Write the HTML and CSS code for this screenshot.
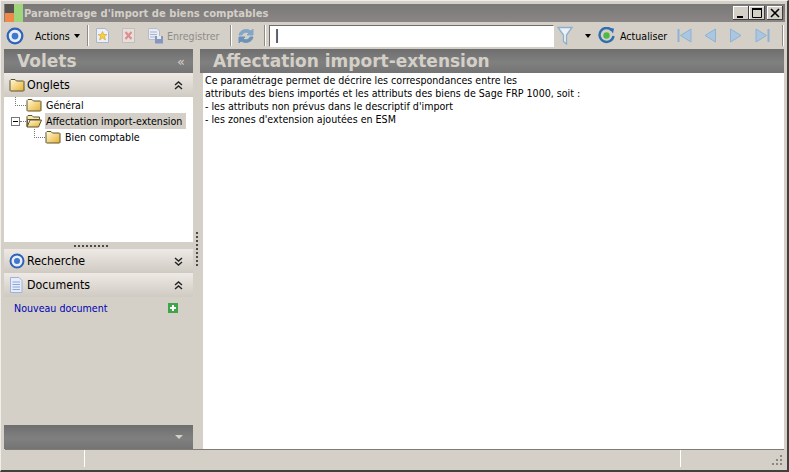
FILE: index.html
```html
<!DOCTYPE html>
<html>
<head>
    <meta charset="UTF-8">
    <title>Paramétrage d'import de biens comptables</title>
    <link rel="stylesheet" href="styles.css">
</head>
<body>
    <svg class="defs" width="0" height="0">
        <defs>
            <linearGradient id="folderFill" x1="0" y1="0" x2="1" y2="1">
                <stop offset="0" stop-color="#fffbe0"/>
                <stop offset="1" stop-color="#e8b02c"/>
            </linearGradient>
            <symbol id="folder" viewBox="0 0 16 14">
                <path d="M1 12.500V2.500L2 1.500H6L7.500 3H14.500L15 3.500V12.500L14.500 13H1.500Z" fill="url(#folderFill)" stroke="#5c5430"/>
            </symbol>
            <symbol id="folder-open" viewBox="0 0 16 14">
                <path d="M1 12.500V2.500L2 1.500H6L7.500 3H13.500V5.500H1.500Z" fill="#f6e6a8" stroke="#5c5430"/>
                <path d="M1 13L4 6H15.500L12.500 13Z" fill="url(#folderFill)" stroke="#5c5430"/>
            </symbol>
            <symbol id="target" viewBox="0 0 16 16">
                <circle cx="8" cy="8" r="6.500" fill="#e8eef8" stroke="#2f62b8" stroke-width="2"/>
                <circle cx="8" cy="8" r="3" fill="#3f78cc"/>
            </symbol>
            <symbol id="dbl-down" viewBox="0 0 9 9">
                <path d="M1 1L4.500 4L8 1M1 5L4.500 8L8 5" fill="none" stroke="#222" stroke-width="1.400"/>
            </symbol>
            <symbol id="dbl-up" viewBox="0 0 9 9">
                <path d="M1 4L4.500 1L8 4M1 8L4.500 5L8 8" fill="none" stroke="#222" stroke-width="1.400"/>
            </symbol>
        </defs>
    </svg>

    <div class="window">
        <!-- Title bar -->
        <div class="titlebar">
            <svg class="app-icon" width="18" height="18" viewBox="0 0 18 18">
                <rect x="0" y="0" width="9" height="9" fill="#55524f"/>
                <rect x="9" y="0" width="9" height="18" fill="#9fd67c"/>
                <rect x="0" y="9" width="9" height="9" fill="#f0884a"/>
            </svg>
            <span class="title-text">Paramétrage d'import de biens comptables</span>
            <div class="win-buttons">
                <span class="win-btn">
                    <svg width="16" height="14" viewBox="0 0 16 14"><rect x="4" y="10" width="6" height="2" fill="#000"/></svg>
                </span>
                <span class="win-btn">
                    <svg width="16" height="14" viewBox="0 0 16 14"><path d="M3.500 2.500H12.500V11.500H3.500Z" fill="none" stroke="#000"/><rect x="3" y="2" width="10" height="2" fill="#000"/></svg>
                </span>
                <span class="win-btn win-btn-close">
                    <svg width="16" height="14" viewBox="0 0 16 14"><path d="M4 3L12 11M12 3L4 11" stroke="#000" stroke-width="1.600"/></svg>
                </span>
            </div>
        </div>

        <!-- Toolbar -->
        <div class="toolbar">
            <svg class="tb-target" width="18" height="18"><use href="#target"/></svg>
            <span class="tb-label tb-actions">Actions</span>
            <span class="caret"></span>
            <span class="tb-sep tb-sep-a"></span>
            <svg class="tb-new" width="15" height="17" viewBox="0 0 15 17">
                <path d="M1.500 1.500H10L13.500 4.500V15.500H1.500Z" fill="#eef0f8" stroke="#a9b4d0"/>
                <path d="M7.500 4.500L8.900 7.500H11.900L9.500 9.500L10.500 13L7.500 11L4.500 13L5.500 9.500L3.100 7.500H6.100Z" fill="#f5cf3c" stroke="#c99a20" stroke-width=".5"/>
            </svg>
            <svg class="tb-del" width="15" height="17" viewBox="0 0 15 17">
                <path d="M1.500 1.500H13.500V15.500H1.500Z" fill="#e6dfdc" stroke="#c3bcba"/>
                <path d="M4.500 5L10.500 12M10.500 5L4.500 12" stroke="#dc8f8f" stroke-width="2.200"/>
            </svg>
            <svg class="tb-save" width="17" height="17" viewBox="0 0 17 17">
                <path d="M1.500 1.500H10L12.500 4V12.500H1.500Z" fill="#e9ecf3" stroke="#b4bccd"/>
                <path d="M3 5H10M3 7.500H10M3 10H10" stroke="#a8b4cf"/>
                <rect x="8" y="9" width="8" height="7.500" fill="#8696bc"/>
                <rect x="10" y="9" width="4" height="3" fill="#e6e9f2"/>
            </svg>
            <span class="tb-label tb-disabled">Enregistrer</span>
            <span class="tb-sep tb-sep-b"></span>
            <svg class="tb-sync" width="18" height="18" viewBox="0 0 18 18">
                <path d="M2 8C3 3 9 1 14 4L16 2V8H10L12 6C9 4.500 6 5.500 5 8Z" fill="#82a6c8" stroke="#82a6c8"/>
                <path d="M16 10C15 15 9 17 4 14L2 16V10H8L6 12C9 13.500 12 12.500 13 10Z" fill="#6b93ba" stroke="#6b93ba"/>
            </svg>
            <span class="tb-sep tb-sep-c"></span>
            <input class="tb-input" type="text" value="|">
            <svg class="tb-funnel" width="16" height="20" viewBox="0 0 16 20">
                <path d="M1 1.500H15L9.500 9V18L6.500 15.500V9Z" fill="#eaf1f7" stroke="#8fb0ca" stroke-width="1.300"/>
            </svg>
            <span class="caret caret-filter"></span>
            <svg class="tb-refresh" width="17" height="17" viewBox="0 0 17 17">
                <path d="M14 3.500A7 7 0 1 0 15.500 9" fill="none" stroke="#2f6fb0" stroke-width="2.400"/>
                <path d="M11 1L16 1.500L15 6.500Z" fill="#2f6fb0"/>
                <circle cx="8.500" cy="8.500" r="3.200" fill="#4fb847"/>
            </svg>
            <span class="tb-label tb-refresh-label">Actualiser</span>
            <svg class="tb-nav nav-first" width="15" height="15" viewBox="0 0 15 15"><path d="M1.500 1V14" stroke="#8fb2d4" stroke-width="2"/><path d="M14 1V14L3.500 7.500Z" fill="#aac6e0" stroke="#8fb2d4"/></svg>
            <svg class="tb-nav nav-prev" width="12" height="15" viewBox="0 0 12 15"><path d="M11.500 1V14L1 7.500Z" fill="#aac6e0" stroke="#8fb2d4"/></svg>
            <svg class="tb-nav nav-next" width="12" height="15" viewBox="0 0 12 15"><path d="M.5 1V14L11 7.500Z" fill="#aac6e0" stroke="#8fb2d4"/></svg>
            <svg class="tb-nav nav-last" width="15" height="15" viewBox="0 0 15 15"><path d="M13.500 1V14" stroke="#8fb2d4" stroke-width="2"/><path d="M1 1V14L11.500 7.500Z" fill="#aac6e0" stroke="#8fb2d4"/></svg>
            <span class="tb-sep tb-sep-d"></span>
        </div>

        <div class="main">
            <!-- Left panel -->
            <div class="sidebar">
                <div class="dark-header">
                    <span class="dark-title volets-title">Volets</span>
                    <span class="collapse-mark">«</span>
                </div>
                <div class="section-header">
                    <svg width="16" height="14"><use href="#folder"/></svg>
                    <span class="section-title">Onglets</span>
                    <svg class="chevrons" width="9" height="9"><use href="#dbl-up"/></svg>
                </div>
                <div class="tree">
                    <div class="tree-row tree-row-first">
                        <span class="branch branch-top"></span>
                        <svg width="16" height="14"><use href="#folder"/></svg>
                        <span class="tree-label">Général</span>
                    </div>
                    <div class="tree-row tree-row-root">
                        <span class="expander"></span>
                        <span class="branch branch-short"></span>
                        <svg width="16" height="14"><use href="#folder-open"/></svg>
                        <span class="tree-label tree-label-selected">Affectation import-extension</span>
                    </div>
                    <div class="tree-row tree-row-child">
                        <span class="branch branch-child"></span>
                        <svg width="16" height="14"><use href="#folder"/></svg>
                        <span class="tree-label">Bien comptable</span>
                    </div>
                </div>
                <div class="h-grip"><span class="h-grip-dots"></span></div>
                <div class="section-header">
                    <svg width="16" height="16"><use href="#target"/></svg>
                    <span class="section-title">Recherche</span>
                    <svg class="chevrons" width="9" height="9"><use href="#dbl-down"/></svg>
                </div>
                <div class="section-header">
                    <svg class="doc-icon" width="14" height="16" viewBox="0 0 14 16">
                        <path d="M1.500 .5H10L13 3.500V15.500H1.500Z" fill="#e6ecfa" stroke="#9fb2dc"/>
                        <path d="M3.500 5H11M3.500 7.500H11M3.500 10H11M3.500 12.500H11" stroke="#8ea6d8"/>
                    </svg>
                    <span class="section-title">Documents</span>
                    <svg class="chevrons" width="9" height="9"><use href="#dbl-up"/></svg>
                </div>
                <div class="doc-panel">
                    <div class="doc-row">
                        <span class="doc-link">Nouveau document</span>
                        <svg width="10" height="10" viewBox="0 0 10 10">
                            <rect width="10" height="10" fill="#3fa648"/>
                            <path d="M5 2V8M2 5H8" stroke="#fff" stroke-width="2"/>
                        </svg>
                    </div>
                </div>
                <div class="dark-header dark-footer">
                    <span class="footer-caret"></span>
                </div>
            </div>

            <div class="v-grip"><span class="v-grip-dots"></span></div>

            <!-- Right panel -->
            <div class="content">
                <div class="dark-header">
                    <span class="dark-title content-title">Affectation import-extension</span>
                </div>
                <div class="description">
                    Ce paramétrage permet de décrire les correspondances entre les<br>
                    attributs des biens importés et les attributs des biens de Sage FRP 1000, soit :<br>
                    - les attributs non prévus dans le descriptif d'import<br>
                    - les zones d'extension ajoutées en ESM
                </div>
            </div>
        </div>

        <!-- Status bar -->
        <div class="statusbar">
            <span class="status-cell status-a"></span>
            <span class="status-cell status-b"></span>
            <span class="status-cell status-c">
                <svg class="resize-grip" width="12" height="12" viewBox="0 0 12 12">
                    <path d="M9 1h2v2H9zM5 5h2v2H5zM9 5h2v2H9zM1 9h2v2H1zM5 9h2v2H5zM9 9h2v2H9z" fill="#8a8780"/>
                </svg>
            </span>
        </div>
    </div>
</body>
</html>
```

FILE: styles.css
```css
* {
    box-sizing: border-box;
}
body {
    margin: 0;
    overflow: hidden;
    background-color: #d4d0c8;
    font-family: "DejaVu Sans", Verdana, sans-serif;
    font-stretch: condensed;
    font-size: 10.600px;
    color: #000;
}
.defs {
    display: block;
    height: 0;
}
.window {
    width: 789px;
    height: 472px;
    display: flex;
    flex-direction: column;
    border-top: 1px solid #efeee9;
    border-left: 1px solid #efeee9;
    border-right: 2px solid #404040;
    border-bottom: 2px solid #404040;
    padding: 3px 2px 3px 3px;
}

/* Title bar */
.titlebar {
    height: 18px;
    flex: none;
    display: flex;
    align-items: center;
    background: linear-gradient(#7b7878, #8a8686);
    padding-left: 1px;
}
.app-icon {
    flex: none;
}
.title-text {
    margin-left: 1px;
    font-stretch: normal;
    font-size: 10px;
    font-weight: bold;
    color: #d4d0c8;
}
.win-buttons {
    margin-left: auto;
    display: flex;
    margin-right: 2px;
}
.win-btn {
    width: 16px;
    height: 14px;
    background: #d4d0c8;
    box-shadow: inset -1px -1px 0 #404040, inset 1px 1px 0 #fff;
}
.win-btn svg {
    display: block;
}
.win-btn-close {
    margin-left: 2px;
}

/* Toolbar */
.toolbar {
    height: 27px;
    flex: none;
    display: flex;
    align-items: center;
    background: #d4d0c8;
}
.toolbar svg {
    flex: none;
}
.tb-target {
    margin-left: 2px;
}
.tb-label {
    white-space: nowrap;
}
.tb-actions {
    width: 38px;
    margin-left: 11px;
}
.caret {
    width: 0;
    height: 0;
    margin-left: 1px;
    border-left: 3.500px solid transparent;
    border-right: 3.500px solid transparent;
    border-top: 4px solid #000;
}
.tb-sep {
    width: 2px;
    height: 21px;
    flex: none;
    background: #8f8c85;
    border-right: 1px solid #fff;
}
.tb-sep-a {
    margin-left: 7px;
}
.tb-new {
    margin-left: 6px;
}
.tb-del {
    margin-left: 11px;
}
.tb-save {
    margin-left: 11px;
}
.tb-disabled {
    width: 54px;
    margin-left: 3px;
    color: #8e8c87;
}
.tb-sep-b {
    margin-left: 9px;
}
.tb-sync {
    margin-left: 5px;
}
.tb-sep-c {
    margin-left: 9px;
}
.tb-input {
    width: 285px;
    height: 22px;
    margin-left: 3px;
    padding: 0 0 2px 5px;
    background: #fff;
    border: 1px solid;
    border-color: #6e6c66 #fff #fff #6e6c66;
    font-family: "Liberation Sans", Arial, sans-serif;
    font-size: 15px;
    color: #000;
}
.tb-funnel {
    margin-left: 3px;
}
.caret-filter {
    margin-left: 12px;
}
.tb-refresh {
    margin-left: 7px;
}
.tb-refresh-label {
    width: 47px;
    margin-left: 5px;
}
.nav-first {
    margin-left: 10px;
}
.nav-prev {
    margin-left: 12px;
}
.nav-next {
    margin-left: 14px;
}
.nav-last {
    margin-left: 13px;
}
.tb-sep-d {
    margin-left: 12px;
}

/* Panels */
.main {
    flex: 1;
    display: flex;
    min-height: 0;
}
.sidebar {
    width: 189px;
    flex: none;
    display: flex;
    flex-direction: column;
}
.dark-header {
    height: 24px;
    flex: none;
    display: flex;
    align-items: center;
    background: linear-gradient(#6e6e6e, #808080 55%, #747474);
}
.dark-title {
    font-stretch: normal;
    font-weight: bold;
    font-size: 17px;
    color: #d4d0c8;
}
.volets-title {
    margin-left: 13px;
}
.collapse-mark {
    margin-left: auto;
    margin-right: 8px;
    font-stretch: normal;
    font-size: 13px;
    color: #d4d0c8;
}
.section-header {
    height: 24px;
    flex: none;
    display: flex;
    align-items: center;
    padding-left: 5px;
    background: linear-gradient(#eee9e4, #cfcbc3);
}
.section-header svg {
    flex: none;
}
.section-title {
    margin-left: 2px;
    font-size: 12.300px;
}
.doc-icon {
    margin-right: 2px;
}
.chevrons {
    margin-left: auto;
    margin-right: 10px;
}

/* Tree */
.tree {
    height: 145px;
    flex: none;
    background: #fff;
}
.tree-row {
    height: 16px;
    display: flex;
    align-items: center;
}
.tree-row svg {
    flex: none;
}
.tree-row-first {
    padding-left: 11px;
}
.tree-row-root {
    padding-left: 7px;
}
.tree-row-child {
    padding-left: 30px;
}
.branch {
    display: block;
    flex: none;
    height: 9px;
    border-left: 1px dotted #777;
    border-bottom: 1px dotted #777;
    margin-top: -8px;
}
.branch-top {
    width: 11px;
}
.branch-short {
    width: 6px;
    border-left: none;
    height: 1px;
    margin-top: 0;
}
.branch-child {
    width: 11px;
}
.expander {
    position: relative;
    width: 9px;
    height: 9px;
    flex: none;
    border: 1px solid #777;
    background: #fff;
}
.expander::after {
    content: "";
    position: absolute;
    left: 1px;
    top: 3px;
    width: 5px;
    height: 1px;
    background: #000;
}
.tree-label {
    margin-left: 3px;
    height: 16px;
    line-height: 17px;
    padding: 0 4px 0 1px;
    white-space: nowrap;
}
.tree-label-selected {
    background: #d4d0c8;
}
.h-grip {
    height: 7px;
    flex: none;
    display: flex;
    justify-content: center;
    align-items: center;
    padding-right: 16px;
}
.h-grip-dots {
    width: 34px;
    height: 2px;
    background-image: repeating-linear-gradient(90deg, #4a4a4a 0 2px, transparent 2px 4px);
}
.doc-panel {
    flex: 1;
    padding: 5px 15px 0 10px;
}
.doc-row {
    display: flex;
    align-items: center;
    justify-content: space-between;
    height: 12px;
}
.doc-link {
    color: #0000b4;
}
.dark-footer {
    justify-content: flex-end;
}
.footer-caret {
    width: 0;
    height: 0;
    margin-right: 10px;
    border-left: 4px solid transparent;
    border-right: 4px solid transparent;
    border-top: 4px solid #d4d0c8;
}
.v-grip {
    width: 7px;
    flex: none;
    display: flex;
    align-items: center;
    justify-content: center;
}
.v-grip-dots {
    width: 2px;
    height: 34px;
    background-image: repeating-linear-gradient(#4a4a4a 0 2px, transparent 2px 4px);
}
.content {
    flex: 1;
    display: flex;
    flex-direction: column;
    min-width: 0;
    margin-right: 1px;
}
.content-title {
    margin-left: 13px;
}
.description {
    flex: 1;
    margin-left: 3px;
    padding: 1px 0 0 2px;
    background: #fff;
    line-height: 13px;
}

/* Status bar */
.statusbar {
    height: 18px;
    flex: none;
    display: flex;
    border-top: 1px solid #7f7c76;
    margin: 0 1px;
}
.status-cell {
    display: block;
    height: 17px;
    position: relative;
    background: #d4d0c8;
}
.status-a {
    width: 79px;
}
.status-b {
    width: 596px;
    border-left: 1px solid #fff;
}
.status-c {
    flex: 1;
    border-left: 1px solid #fff;
}
.resize-grip {
    position: absolute;
    right: 1px;
    bottom: 1px;
}
```
